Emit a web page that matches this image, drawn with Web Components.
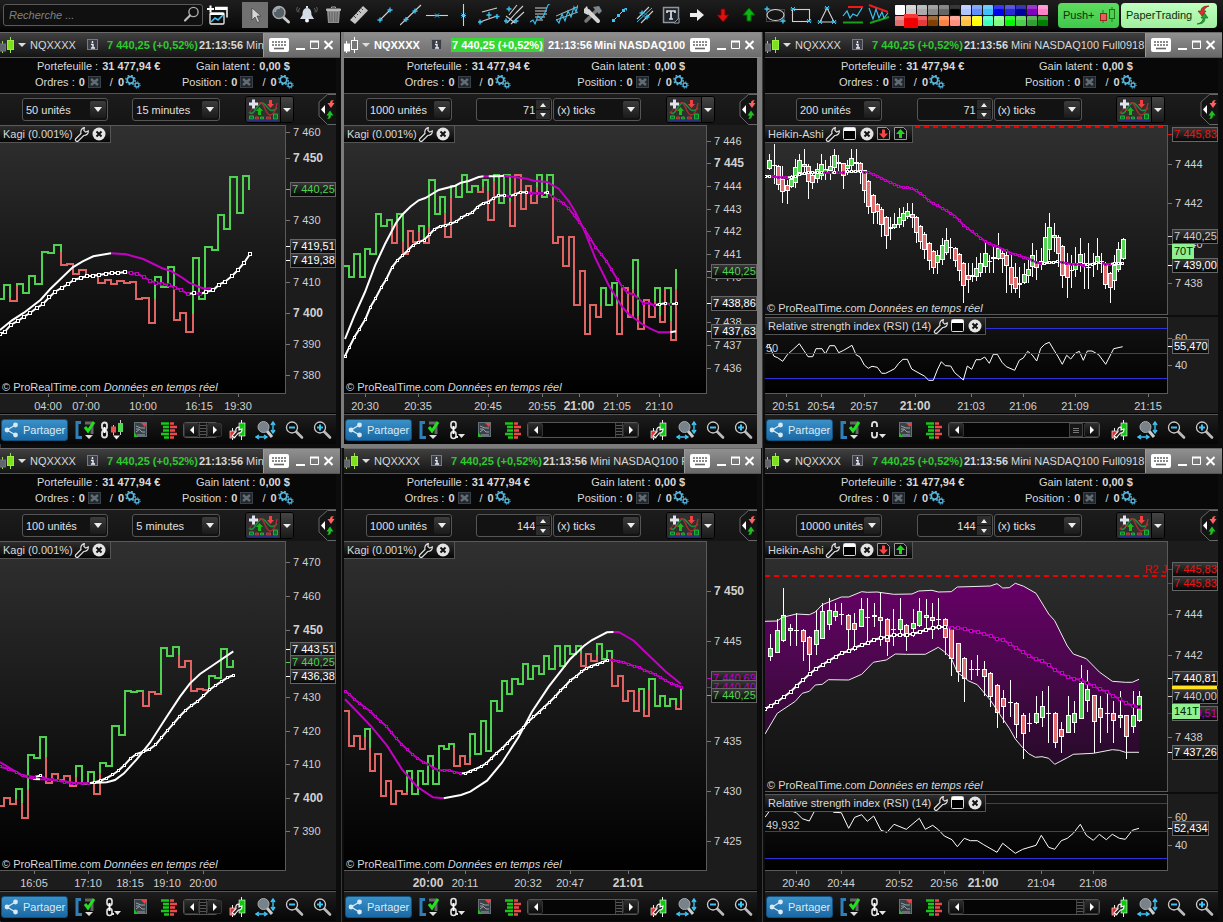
<!DOCTYPE html>
<html lang="fr">
<head>
<meta charset="utf-8">
<title>ProRealTime</title>
<style>
html{height:100%}
body{margin:0;height:100%;background:#000;color:#d8d8d8;font:11px/14px "Liberation Sans",Arial,sans-serif;overflow:hidden;display:flex;flex-direction:column}
main{flex:1;min-height:0;display:grid;grid-template-columns:minmax(0,341fr) minmax(0,421fr) minmax(0,461fr);grid-template-rows:minmax(0,416fr) minmax(0,474fr)}
</style>
</head>
<body>
<tool-bar></tool-bar>
<main>
  <chart-window class="first" units="50 unités" period="15 minutes" link="candle" chart="a"></chart-window>
  <chart-window active units="1000 unités" ticks="71" period="(x) ticks" chart="b"></chart-window>
  <chart-window class="wide" units="200 unités" ticks="71" period="(x) ticks" link="open" thumb="middle" chart="c"></chart-window>
  <chart-window class="first last" units="100 unités" period="5 minutes" chart="d"></chart-window>
  <chart-window class="last" units="1000 unités" ticks="144" period="(x) ticks" chart="e"></chart-window>
  <chart-window class="wide last" units="10000 unités" ticks="144" period="(x) ticks" chart="f"></chart-window>
</main>
<script>
/* ---------- icons ---------- */
const C = '#3cc4f4';
const plus = (x, y) => `<path d="M${x-2.5} ${y}h5M${x} ${y-2.5}v5" stroke="${C}" stroke-width="1.4"/>`;
const star = (x, y) => `<path d="M${x-2} ${y-2}l4 4M${x+2} ${y-2}l-4 4M${x-2.5} ${y}h5" stroke="${C}" stroke-width="1"/>`;
const W = 'stroke="#d0d0d0" stroke-width="1.1" fill="none"';
const wrench = '<path d="M2 15.500L8.500 9c-.8-2.500.3-5.500 3.500-6l-.5 3.300 2 1.500 3-1.300c.2 3-2 5-5 4.800L4.800 17.500C3 18.500 1 17 2 15.500z"';
const glass = (x, y, s) => `<path d="M${x+4} ${y+4}l6 6" stroke="#bbb" stroke-width="2.600" stroke-linecap="round"/><circle cx="${x}" cy="${y}" r="5.500" ${s}/>`;
const ICONS = {
 search:[18,18,`<circle cx="11.500" cy="6" r="4.600" fill="none" stroke="#aaa" stroke-width="1.400"/><path d="M8 9.500L3 14.500" stroke="#bbb" stroke-width="2.200" stroke-linecap="round"/>`],
 layout:[22,22,`<path d="M8 2.500h12v10" fill="none" stroke="#fff" stroke-width="1.500"/><path d="M8 4h12" stroke="#fff" stroke-width="2"/><rect x="3" y="8" width="14" height="11" rx="1" fill="#0a0a0a" stroke="#eee" stroke-width="1.300"/><path d="M3 9h14" stroke="#fff" stroke-width="2"/><path d="M4 17l4-4 3 2 5-5" fill="none" stroke="${C}" stroke-width="1.600"/><path d="M0 4h7M3.500 .5v7" stroke="#fff" stroke-width="2"/>`],
 cursor:[22,22,`<path d="M8 4v12l3-3 2.500 5.500 2-1L13 12h4z" fill="#d4d8dc" stroke="#333" stroke-width=".6"/>`],
 zoom:[22,22,`<path d="M12 12l6.500 6" stroke="#ccc" stroke-width="3" stroke-linecap="round"/><circle cx="9" cy="8.500" r="6" fill="#566067" stroke="#aaa" stroke-width="1.500"/><path d="M5 8a4 4 0 0 1 5-4" stroke="#9ab" stroke-width="2" fill="none"/>`],
 bell:[22,22,`<path d="M11 4c4 0 4.500 4 4.500 7l2.500 4H4l2.500-4c0-3 .5-7 4.500-7z" fill="#d3dce6"/><circle cx="11" cy="16.500" r="2" fill="#f4f4f4"/><path d="M11 2v2" stroke="#ddd" stroke-width="2"/><path d="M4 4c-1.500 1-1.500 3-1 4.500M1.500 3c-1 1.500-1 3 0 5M18 4c1.500 1 1.500 3 1 4.500M20.500 3c1 1.500 1 3 0 5" fill="none" stroke="#777" stroke-width=".8"/>`],
 trash:[22,22,`<path d="M5 7h13l-1 12H6z" fill="#8d8d8d"/><path d="M7.500 8l.5 10M10 8v10M12.800 8v10M15.300 8l-.5 10" stroke="#555" stroke-width=".8"/><rect x="4" y="4.500" width="15" height="2.500" rx="1" fill="#b8b8b8"/><path d="M9.500 4V3h4v1" stroke="#aaa" fill="none"/>`],
 ruler:[22,22,`<path d="M2 16L15 2l5 4.500L7 20z" fill="#c4c4c4"/><path d="M6 12l2 2M8.500 9.500l1.500 1.500M11 7l2 2M13.500 4.500L15 6" stroke="#444"/>`],
 seg:[22,22,`<path d="M6 16L16 6" ${W}/>${plus(6,16)}${plus(16,6)}`],
 ray:[22,22,`<path d="M0 21L21 1" ${W}/>${plus(6,15.5)}${plus(15,7)}`],
 hline:[22,22,`<path d="M0 11.500h22" ${W}/>${star(11,11.5)}`],
 vline:[22,22,`<path d="M11.500 0v22" ${W}/>${star(11.5,11.5)}`],
 channel:[22,22,`<path d="M4 8L19 4M2 18l17-6" ${W}/><path d="M11 8v6M8.500 11h5" stroke="${C}" stroke-width="1.300"/>${plus(19,12.5)}${plus(2,18)}`],
 fork:[22,22,`<path d="M3 19L12 9M7 20L20 8M2 12l9 7M13 1L5 11M12 9l7-7" ${W}/>${plus(5,5)}${plus(2,17)}${plus(12,17)}`],
 fib:[22,22,`<path d="M5 4h12M5 7h12M5 10h12M5 13h10M7 16h6" ${W}/><path d="M0 18l3-2 2 4 3-8 3 3 3-4 4-10 3-2" fill="none" stroke="${C}" stroke-width="1.100"/>`],
 reg:[22,22,`<path d="M0 16L22 8M0 12L21 3" ${W} opacity=".8"/><path d="M0 15l3 4 3-9 3 7 3-10 3 6 3-10 2 5 2-7" fill="none" stroke="${C}" stroke-width="1.100"/>`],
 tools:[22,22,`<path d="M4 17L14 7" stroke="#777" stroke-width="3.500" stroke-linecap="round"/><path d="M11 3l6-1 3 5-3 3-3-3z" fill="#7d858c"/><path d="M6 7l10 10" stroke="#d4d4d4" stroke-width="4" stroke-linecap="round"/><path d="M2 5l3-3 1 3 2 1 1 3-3 2-4-2z" fill="#d4d4d4"/>`],
 anch:[22,22,`<path d="M5 17L17 5" stroke="#ccc" stroke-dasharray="5 3"/><path d="M4 15h3v3H4zM9 10h3v3H9zM14 5h3v3h-3z" fill="${C}"/><path d="M16 4h3v3" fill="${C}"/>`],
 para:[22,22,`<path d="M3 15L15 3M7 19L19 7" ${W}/><path d="M3 18L18 4" stroke="${C}"/>${plus(8,9)}${plus(13,13)}`],
 text:[22,22,`<rect x="3.500" y="3.500" width="15" height="15" fill="#20242a" stroke="#8b96a3" stroke-width="1.500"/><path d="M7 9V7h8v2M11 7v8M9 15h4" stroke="#ddd" stroke-width="1.700" fill="none"/><path d="M14 19l5-5v5z" fill="#111" stroke="#8b96a3"/>`],
 right:[22,22,`<path d="M4 9h7V5l7 6-7 6v-4H4z" fill="#eee"/>`],
 down:[22,22,`<path d="M9 5h4v6h4l-6 7-6-7h4z" fill="#e01010" stroke="#700"/>`],
 upg:[22,22,`<path d="M9 17h4v-6h4L11 4l-6 7h4z" fill="#10b410" stroke="#060"/>`],
 ellipse:[22,22,`<rect x="2.500" y="5.500" width="18" height="12" fill="none" stroke="#444"/><ellipse cx="11.500" cy="11" rx="8.500" ry="5.500" ${W}/>${plus(3,5)}${plus(19,17)}`],
 rect:[22,22,`<rect x="2.500" y="5.500" width="17" height="12" ${W}/>${star(3,5)}${star(19,17)}`],
 tri:[22,22,`<path d="M11 4L4 18h14z" ${W}/>${star(11,4)}${star(4,18)}${star(18,18)}`],
 trend:[22,22,`<path d="M6 3h15" stroke="#f01818" stroke-width="2"/><path d="M1 18.500h20" stroke="#18a018" stroke-width="2"/><path d="M1 12l4-5 3 7 3-4 4 2 5-8" fill="none" stroke="${C}" stroke-width="1.200"/>`],
 wedge:[22,22,`<path d="M1 1l19 7" stroke="#f01818" stroke-width="2"/><path d="M2 19l19-6" stroke="#18a018" stroke-width="2"/><path d="M1 4l4 11 3-10 3 9 3-6 2 6 4-5" fill="none" stroke="${C}" stroke-width="1.100"/>`],
 candles:[16,18,`<path d="M2.500 5v12M10.500 1v16" stroke="var(--wick,#9be04a)"/><rect x="-.5" y="8" width="6" height="7" fill="var(--a,#60646c)" stroke="var(--as,#70747c)"/><rect x="7.500" y="4.500" width="6" height="9" fill="var(--b,#7ee01c)" stroke="var(--bs,#98f040)"/>`],
 info:[12,12,`<rect x=".5" y=".5" width="10" height="10" fill="#3b3e48" stroke="#777a84"/><path d="M5.500 2v2M4 5.500h2v3M4 9h4" stroke="#eee" stroke-width="1.400" fill="none"/>`],
 keyboard:[20,14,`<rect width="20" height="14" rx="2" fill="#fff"/><path d="M3 4h14M3 7h14" stroke="#666" stroke-width="1.600" stroke-dasharray="2 1"/><path d="M5 10.500h10" stroke="#666" stroke-width="1.600"/>`],
 min:[11,14,`<path d="M1 11h9" stroke="#fff" stroke-width="2"/>`],
 max:[11,14,`<path d="M1.500 4v6.500h8V4" fill="none" stroke="#fff"/><path d="M1 3.500h9" stroke="#fff" stroke-width="2"/>`],
 close:[11,14,`<path d="M1.500 3l8 8M9.500 3l-8 8" stroke="#fff" stroke-width="2"/>`],
 cancel:[14,12,`<rect x=".5" y=".5" width="12" height="11" fill="#20262c" stroke="#39424b"/><path d="M3 3l7 6M10 3l-7 6" stroke="#626c74" stroke-width="2.500"/>`],
 gears:[16,14,`<circle cx="5.500" cy="5" r="3.300" fill="none" stroke="#57b7e0" stroke-width="1.700"/><circle cx="5.500" cy="5" r="4.700" fill="none" stroke="#57b7e0" stroke-width="1.300" stroke-dasharray="1.800 1.900"/><circle cx="12" cy="10" r="2" fill="none" stroke="#57b7e0" stroke-width="1.300"/><circle cx="12" cy="10" r="3.200" fill="none" stroke="#57b7e0" stroke-width="1" stroke-dasharray="1.200 1.300"/>`],
 indic:[34,25,`<rect width="34" height="25" fill="#303030"/><path d="M3 15C8 21 11 6 16 6s7 13 15 5" fill="none" stroke="#1f9040" stroke-width="1.500"/><path d="M12 7c6-6 7 11 12 11 4 0 6-6 7-12" fill="none" stroke="#b02c2c" stroke-width="1.500"/><path d="M3 16l4-5 3 3" stroke="#b02c2c" fill="none"/><path d="M3 7h9M7.500 2.500v9" stroke="#dfe4ee" stroke-width="3"/><path d="M12 18v-4h-2l3.500-4 3.500 4h-2v4z" fill="#18b818"/><path d="M23 3h3v4h2l-3.500 4L21 7h2z" fill="#f04040"/><path d="M3.500 22v-3h4v3zM27.500 22v-5h4v5zM14.500 22v-2h3v2z" fill="#0c7020" stroke="#20b040"/><path d="M9.500 22v-2h3v2zM20.500 22v-2h4v2z" fill="#902020" stroke="#c04040"/><path d="M2 23h30" stroke="#2030d0"/>`],
 flap:[18,31,`<path d="M18 .5H9.500L1 8v14l8.500 8.500H18" fill="#141414" stroke="#666"/><path d="M7 11v9l-4-4.500z" fill="#fff"/><path d="M16 6c-3 0-4 1-4 3H9.500l3.500 5 3.500-5h-2c0-1 0-2 1.500-3z" fill="#ff6060"/><path d="M9 25c3 0 4-1 4-3.500h2.500L12 16.500 8.500 21.500h2c0 1.500 0 2.500-1.500 3.500z" fill="#20c020"/>`],
 wrench:[16,16,'<path d="M1.500 13L7 7.500C6.300 5 7.500 2.300 10.300 1.700L9.900 4.500l1.800 1.600L14.300 5c.2 2.700-1.800 4.600-4.600 4.500L4 15.200C2.500 16 .7 14.500 1.500 13z" fill="#111" stroke="#e0e0e0" stroke-width="1.200"/>'],
 win:[14,14,`<rect x=".5" y=".5" width="12" height="12" rx="1" fill="#000" stroke="#ddd"/><path d="M1 2.500h11" stroke="#fff" stroke-width="3"/>`],
 dismiss:[14,14,`<circle cx="7" cy="7" r="6.500" fill="#e4e4e4"/><path d="M4.500 4.500l5 5M9.500 4.500l-5 5" stroke="#111" stroke-width="2"/>`],
 sell:[14,14,`<path d="M.5 .5h9l3 3v9H.5z" fill="#111" stroke="#999"/><path d="M5 2.500h3v4h3l-4.500 5L2 6.500h3z" fill="#f04848"/>`],
 buy:[14,14,`<path d="M.5 .5h9l3 3v9H.5z" fill="#111" stroke="#999"/><path d="M5 11h3V7h3L6.500 2 2 7h3z" fill="#20d820"/>`],
 share:[16,16,`<path d="M11.500 3L3 8l8.500 5" fill="none" stroke="#d8e8f4" stroke-width="1.300"/><circle cx="11.500" cy="3" r="2.400" fill="#d8e8f4"/><circle cx="3" cy="8" r="2.400" fill="#d8e8f4"/><circle cx="11.500" cy="13" r="2.400" fill="#d8e8f4"/>`],
 bracket:[22,20,`<path d="M7 2.500H3v15h5" fill="none" stroke="#2f7fb8" stroke-width="3"/><path d="M11 3h7v11" fill="none" stroke="#666" stroke-width="3"/><path d="M11 7l3 4 6-9" fill="none" stroke="#20e020" stroke-width="3"/><path d="M11 15h8l-4 4z" fill="#ddd"/>`],
 chain:[22,20,`<rect x="5" y="1.500" width="5" height="7" rx="2.500" stroke="#e4e4e4" stroke-width="1.600"/><rect x="5" y="11.500" width="5" height="7" rx="2.500" stroke="#e4e4e4" stroke-width="1.600"/><path d="M7.500 6v8" stroke="#fff" stroke-width="2"/><path d="M10 17h2" stroke="#e4e4e4" stroke-width="2"/><path d="M12 14h7l-3.500 4z" fill="#e4e4e4"/>`],
 chainopen:[22,20,`<path d="M5 7V4.500c0-3.500 5-3.500 5 0V7M5 12v3c0 3.500 5 3.500 5 0v-3" stroke="#e4e4e4" stroke-width="1.800"/><path d="M12 14h7l-3.500 4z" fill="#e4e4e4"/>`],
 chaincandle:[26,20,`<rect x="2" y="2.500" width="5" height="7" rx="2.500" stroke="#e4e4e4" stroke-width="1.800"/><rect x="2" y="10.500" width="5" height="7" rx="2.500" stroke="#e4e4e4" stroke-width="1.800"/><path d="M4.500 7v6" stroke="#fff" stroke-width="2"/><path d="M13.500 5v10M20.500 0v15" stroke="#ccc"/><rect x="11" y="6.500" width="5" height="6" fill="#f05050"/><rect x="18" y="3" width="5" height="9" fill="#50d850"/><path d="M13 15.500h7l-3.500 4z" fill="#eee"/>`],
 notes:[16,18,`<rect x="1.500" y="1.500" width="12" height="14" fill="#3a4248" stroke="#667078"/><path d="M3 5l5 2h4M3 8h3l3 3h3M3 11l4-3M4 14h8" stroke="#98a2aa" fill="none"/><path d="M8 2h6l-2 4z" fill="#f04040"/><path d="M1 16v-5l4 5z" fill="#20c020"/>`],
 book:[18,18,`<path d="M1 2.500h8M3 6h6M3 9.500h6M1 13h8M4 16.500h5" stroke="#18c818" stroke-width="2.400"/><path d="M10 2.500h4M10 6h7M10 9.500h5M10 13h7M10 16.500h4" stroke="#f04848" stroke-width="2.400"/>`],
 setup:[18,20,`<path d="M3.500 8v12M12.500 0v20" stroke="#eee"/><rect x="1" y="11" width="5" height="7" fill="#e03030" stroke="#fff" stroke-width=".6"/><rect x="10" y="3" width="6" height="13" fill="#10c810" stroke="#fff" stroke-width=".6"/><path d="M3 16l4-4.500c-1-3 1-4.500 3-4.500v3l3-1c0 3-2 4-3.500 4l-4 4.500z" fill="#222" stroke="#fff" stroke-width="1.100"/>`],
 fit:[22,20,`<path d="M12 11l5 6" stroke="#ccc" stroke-width="3"/><circle cx="8.500" cy="7" r="5.500" fill="#77828a" stroke="#aaa"/><path d="M18 3v9M16 5l2-3 2 3M16 10l2 3 2-3M2 17h9M4 15l-3 2 3 2M9 15l3 2-3 2" fill="none" stroke="${C}" stroke-width="1.400"/>`],
 zout:[20,20,glass(8,7.5,'fill="#0a0a0a" stroke="#ccc" stroke-width="1.300"')+`<path d="M5 7.500h6" stroke="${C}" stroke-width="2"/>`],
 zin:[20,20,glass(8,7.5,'fill="#0a0a0a" stroke="#ccc" stroke-width="1.300"')+`<path d="M5 7.500h6M8 4.500v6" stroke="${C}" stroke-width="2"/>`],
 push:[18,18,`<path d="M4 4v13M13 1v15" stroke="#1a7a2a"/><rect x="1.500" y="7.500" width="6" height="7" fill="#e06060" stroke="#a02020"/><rect x="10.500" y="3.500" width="5" height="9" fill="#50d050" stroke="#187818"/>`],
 swap:[14,20,`<path d="M13 1C7 1 5 3 5 6H2l4 5 4-5H8c0-2 2-4 5-5z" fill="#d83030" stroke="#801010" stroke-width=".6"/><path d="M1 19c6 0 8-2 8-6h3L8.500 8 5 13h2c0 3-2 5-6 6z" fill="#20a830" stroke="#106018" stroke-width=".6"/>`]
};
const define = (name, make) => customElements.define(name, class extends HTMLElement {
  connectedCallback() {
    if (this.shadowRoot) return;
    this.attachShadow({ mode: 'open' }).innerHTML = make(this);
  }
});
const icon = n => `<ui-icon name="${n}"></ui-icon>`;
const btn = (n, label, cls = '') => `<button type="button" class="${cls}" aria-label="${label}">${icon(n)}</button>`;
const RESET = ':host,*{box-sizing:border-box}button{all:unset;box-sizing:border-box;display:flex;align-items:center;justify-content:center;cursor:pointer}';

define('ui-icon', el => {
  const [w, h, body] = ICONS[el.getAttribute('name')];
  return `<style>:host{display:block;flex:none}svg{display:block}</style><svg width="${w}" height="${h}" viewBox="0 0 ${w} ${h}" fill="none" aria-hidden="true">${body}</svg>`;
});

/* ---------- top toolbar ---------- */
const TOOLS = 'cursor zoom bell trash ruler seg ray hline vline channel fork fib reg tools anch para text right down upg ellipse rect tri trend wedge'.split(' ');
const SWATCHES = '#fff #ccc #aaa #888 #666 #000 #b0c4ff #6090ff #40c0ff #0000f0 #2828d8 #0000a0 #8000c0 #ff80c8 #e07070 #f00000 #e83838 #804000 #ff8040 #ff9080 #ffc040 #ffff00 #40ffc0 #80ff80 #00f800 #48d048 #30a030 #008000'.split(' ');
define('tool-bar', () => `<style>${RESET}
:host{display:flex;align-items:center;height:32px;flex:none;padding:0 7px 0 3px;background:linear-gradient(#1e1e1e,#0a0a0a 28px,#000);overflow:hidden}
label{display:flex;align-items:center;width:200px;height:22px;margin-bottom:2px;padding:0 2px 0 5px;border:1px solid #5a5a5a;border-radius:3px;background:#101010;flex:none}
input{flex:1;min-width:0;padding:0;border:0;outline:0;background:none;color:#999;font:italic 11px "Liberation Sans",Arial,sans-serif}
input::placeholder{color:#808080}
.lay{width:30px;height:28px;flex:none}
.sep{width:1px;height:14px;background:#555;margin:0 5px 4px 4px}
nav{display:flex;padding-bottom:2px}
nav button{width:26px;height:26px;flex:none}
nav button:first-child{background:#707070}
.sw{display:grid;grid-template-columns:repeat(14,11px);grid-auto-rows:11px;margin:0 9px 1px 3px}
.sw button{width:10px;height:10px;box-shadow:inset 0 4px 1px #ffffff38;border-radius:1px}
.sw .on{width:14px;height:14px;margin:-2px;z-index:1}
.act{height:25px;border-radius:4px;gap:4px;color:#0c300c;margin:0 2px 2px 0;justify-content:flex-start;padding:0 4px 0 5px;flex:none}
.p{background:linear-gradient(#5fdc5f,#3fc84a);width:61px}.t{background:linear-gradient(#c0ffc0,#a0f0a0);width:96px}
</style><label><input type="text" placeholder="Recherche ..." aria-label="Recherche">${icon('search')}</label>
${btn('layout', 'Nouvelle disposition', 'lay')}<span class="sep"></span>
<nav>${TOOLS.map(t => btn(t, t)).join('')}</nav>
<div class="sw">${SWATCHES.map((c, i) => `<button type="button" aria-label="Couleur ${c}" class="${i == 15 ? 'on' : ''}" style="background-color:${c}"></button>`).join('')}</div>
<button type="button" class="act p">Push+${icon('push')}</button><button type="button" class="act t">PaperTrading${icon('swap')}</button>`);

/* ---------- window parts ---------- */
define('window-title', () => `<style>${RESET}
:host{display:flex;align-items:center;height:26px;flex:none;margin-right:-4px;border-bottom:1px solid #555;border-top:1px solid #6a6a6a;background:linear-gradient(#404040,#141414);white-space:nowrap;overflow:hidden}
:host([active]){background:linear-gradient(#8e8e8e,#6c6c6c);border-color:#8a8a8a;color:#fff;font-weight:bold;--wick:#fff;--a:#fff;--as:#fff;--b:#777;--bs:#fff}
.txt{flex:1;min-width:0;overflow:hidden;display:flex;align-items:center}
.dd{border:4px solid transparent;border-top-color:#ddd;border-bottom:0;margin:0 4px 0 2px;flex:none}
.sym{width:57px;flex:none}.px{width:90px;height:14px;margin-left:7px;padding-left:1px;color:#2fc92f;font-weight:bold;flex:none}
:host([active]) .px{width:93px;margin-left:8px;background:#35d835;color:#fff}
.tm{margin:0 3px;font-weight:bold;flex:none}:host([active]) .tm{margin:0 2px 0 4px}
.box{display:flex;align-items:center;gap:3px;width:77px;height:24px;padding:0 4px 0 5px;background:linear-gradient(#909090,#686868);flex:none;border-left:1px solid #999}
:host([active]) .box{width:74px;background:none;border-color:transparent;padding-left:2px}
.box button:first-child{margin-right:3px}
</style><div class="txt">${icon('candles')}<i class="dd"></i><span class="sym">NQXXXX</span>${icon('info')}<span class="px">7 440,25 (+0,52%)</span><span class="tm">21:13:56</span><span>Mini NASDAQ100 Full0918</span></div>
<div class="box">${btn('keyboard', 'Clavier')}${btn('min', 'Réduire')}${btn('max', 'Agrandir')}${btn('close', 'Fermer')}</div>`);

const pos = l => `<p>${l} : <b>0</b>${icon('cancel')}<s>/</s><b>0</b>${icon('gears')}</p>`;
define('account-bar', () => `<style>${RESET}
:host{display:flex;justify-content:space-evenly;height:36px;flex:none;padding:0 21px 0 11px;border-bottom:1px solid #555;background:#080808;white-space:nowrap}
div{width:123px;flex:none}.r{width:109px}
p{display:flex;align-items:center;height:18px;margin:0}p:first-child{height:15px}p b{margin-left:4px}
.l p:first-child{padding-left:2px}.r p:first-child{padding-left:14px}
s{text-decoration:none;margin:0 1px 0 8px}ui-icon{margin-left:1px}ui-icon[name=cancel]{margin-left:3px}
</style><div class="l"><p>Portefeuille : <b>31 477,94 €</b></p>${pos('Ordres')}</div><div class="r"><p>Gain latent : <b>0,00 $</b></p>${pos('Position')}</div>`);

define('drop-down', el => `<style>
:host{display:block;position:relative;height:23px;flex:none;width:86px}
select{appearance:none;box-sizing:border-box;width:100%;height:23px;margin:0;padding:0 0 0 3px;border:1px solid #555;border-radius:3px;background:#121212;color:#e0e0e0;font:11px "Liberation Sans",Arial,sans-serif}
i{position:absolute;right:2px;top:3px;width:16px;height:17px;border-radius:2px;background:linear-gradient(#3c3c3c,#1a1a1a);pointer-events:none}
i::after{content:"";position:absolute;left:4px;top:6px;border:4px solid transparent;border-top:5px solid #eee;border-bottom:0}
</style><select aria-label="Choix"><option>${el.getAttribute('value')}</option></select><i></i>`);

define('period-bar', el => { const t = el.getAttribute('ticks'); return `<style>${RESET}
:host{display:flex;align-items:center;justify-content:space-between;height:31px;flex:none;padding-left:22px;background:linear-gradient(#1c1c1c,#141414)}
:host(.wide){padding-left:31px}
.g{display:flex;gap:1px}drop-down.p{width:88px}
.spin{display:flex;align-items:center;width:76px;height:23px;padding-right:1px;border:1px solid #555;border-radius:3px;background:#121212}
.spin input{width:58px;padding:0;border:0;background:none;color:#e0e0e0;text-align:right;font:11px "Liberation Sans",Arial,sans-serif}
.spin div{display:grid;gap:1px;margin-left:1px}
.spin button{width:14px;height:9px;background:#2c2c2c}
.spin button::after{content:"";border:3px solid transparent;border-bottom:4px solid #eee;border-top:0}
.spin button+button::after{transform:rotate(180deg)}
.ind{display:flex;width:49px;height:27px;border:1px solid #000;border-radius:3px;background:#2c2c2c;overflow:hidden}
.ind button+button{width:13px;border-left:1px solid #000;background:linear-gradient(#444,#1a1a1a)}
.ind button+button::after{content:"";border:4px solid transparent;border-top-color:#eee;border-bottom:0}
</style><drop-down value="${el.getAttribute('units')}"></drop-down>
<div class="g">${t ? `<div class="spin"><input type="text" value="${t}" aria-label="Nombre"><div><button type="button" aria-label="Plus"></button><button type="button" aria-label="Moins"></button></div></div>` : ''}<drop-down class="p" value="${el.getAttribute('period')}"></drop-down></div>
<div class="ind">${btn('indic', 'Indicateurs')}<button type="button" aria-label="Options"></button></div>${btn('flap', 'Volet ordres')}`; });

define('window-footer', el => { const l = el.getAttribute('link'); const mid = el.getAttribute('thumb') == 'middle'; return `<style>${RESET}
:host{display:flex;align-items:center;height:29px;flex:none;padding-left:1px;background:linear-gradient(#1d1d1d,#060606)}
.share{width:67px;height:22px;margin-right:3px;gap:3px;justify-content:flex-start;padding-left:2px;border-radius:3px;background:linear-gradient(#3a90c8,#1a68a4);color:#dceaf4;flex:none;border:1px solid #12507e}
.k{width:28px;height:26px;flex:none}
.bar{display:flex;flex:1;min-width:0;height:16px;border:1px solid #555;border-radius:3px;background:#050505;margin:0 6px 0 0}
.bar button{width:15px;height:14px;background:linear-gradient(#2c2c2c,#0c0c0c);border-radius:2px;border:1px solid #333;flex:none}
.bar button::after{content:"";border:4px solid transparent;border-right-color:#fff;border-left:0}
.bar button:last-child::after{transform:rotate(180deg)}
.track{flex:1;display:flex;justify-content:flex-end}
.track i{width:8px;height:14px;border:1px solid #444;border-width:0 1px;background:repeating-linear-gradient(#111 0 2px,#555 2px 3px)}
.mid i{width:14px;margin-right:1px;border-width:1px;background:linear-gradient(#777,#777) 3px 4px/6px 1px no-repeat,linear-gradient(#777,#777) 3px 6px/6px 1px no-repeat,linear-gradient(#777,#777) 3px 8px/6px 1px no-repeat #161616}
</style><button type="button" class="share">${icon('share')}Partager</button>
${btn('bracket', 'Modèle', 'k')}${btn(l == 'candle' ? 'chaincandle' : l == 'open' ? 'chainopen' : 'chain', 'Lier', 'k')}${btn('notes', 'Notes', 'k')}${btn('book', 'Carnet', 'k')}
<div class="bar"><button type="button" aria-label="Gauche"></button><div class="track ${mid ? 'mid' : ''}"><i></i></div><button type="button" aria-label="Droite"></button></div>
${btn('setup', 'Configurer', 'k')}${btn('fit', 'Ajuster', 'k')}${btn('zout', 'Zoom arrière', 'k')}${btn('zin', 'Zoom avant', 'k')}`; });

define('chart-tag', el => `<style>${RESET}
:host{display:flex;align-items:center;height:17px;padding:0 3px 1px;gap:2px;background:linear-gradient(#2e2e2e,#060606);border:1px solid #555;border-width:0 1px 1px 0;white-space:nowrap}
button{width:15px;height:15px}</style><slot></slot>${el.getAttribute('icons').split(' ').map(n => btn(n, n)).join('')}`);

/* ---------- series: stored in thirds of a pixel, dx/dy bring them to the pane's corner ---------- */
const GREEN = '#4fd24f', RED = '#e06464', MAG = '#c400c4';
const DATA = {
a:{dx:0,dy:75,k:[0,12,748,118,'447 404 453 402 430 377 402 305 309 285 345 341 372 360 378 374 398 390 402 393 399 396 446 443 518 380 411 350 510 488 546 324 447 290 299 195 237 80 188 78'],
 ms:4,s:'w 0,540 36,511 72,488 122,449 150,418 218,352 248,334 280,319 333,310 m 378,313 430,327 485,354 515,364 545,382 566,397 600,412 615,416 634,414',
 d:'w 0,552 14,546 33,524 54,513 72,500 90,489 110,474 129,462 148,442 165,425 186,413 205,402 222,389 243,384 260,378 279,377 297,375 317,371 337,369 355,369 375,366 m 394,369 411,372 432,380 449,392 468,398 487,402 506,405 525,413 543,420 563,432 w 582,429 m 600,432 w 618,426 640,420 657,404 675,395 696,378 714,360 732,339 750,312',
 ax:'7 460|7;7 450|33|b;7 430|95;7 410|157;7 400|188|b;7 390|219;7 380|250;7 440,25|64|g;7 419,51|121|w;7 419,38|135|w',
 tx:'04:00|48;07:00|86;10:00|143;16:15|199;19:30|238'},
b:{dx:-6,dy:-15,k:[9,21,1002,450,'437 470 402 470 386 402 282 318 299 369 282 402 332 366 318 369 180 282 231 351 198 231 165 215 198 216 180 300 165 249 165 318 165 267 198 249 165 231 165 369 351 438 351 555 452 642 554 591 504 555 488 642 503 591 420 626 540 591 504 606 503 660'],
 ms:3,s:'w 9,657 36,590 69,516 99,437 129,372 162,309 180,285 205,260 230,241 250,234 270,222 290,210 340,197 357,188 380,183 410,171 425,169 m 440,169 w 455,169 471,169 486,167 m 510,170 555,176 575,182 615,186 650,206 680,243 700,276 727,331 760,414 800,496 840,560 860,582 900,612 925,626 950,637 985,637 w 1002,634',
 d:'w 9,708 22,682 37,652 52,628 70,598 85,562 100,536 118,502 133,478 150,442 166,421 182,406 198,391 213,375 229,367 246,360 262,344 277,328 295,319 311,316 326,311 342,305 358,293 375,284 391,278 406,261 423,250 438,246 454,235 470,227 487,226 m 502,229 w 519,223 535,217 553,217 m 568,219 585,220 601,220 w 616,217 m 632,230 649,241 664,249 680,265 697,287 712,307 728,328 746,357 761,382 778,403 794,424 808,448 826,478 841,500 856,518 874,523 889,535 904,549 921,550 937,556 w 952,553 970,550 m 985,552 w 1003,551',
 ax:'7 446|16;7 445|38|b;7 444|61;7 443|84;7 442|106;7 441|129;7 440|152;7 438|197;7 437|220;7 436|243;7 440,25|146|g;7 438,86|178|w;7 437,63|206|w',
 tx:'20:30|21;20:35|74;20:45|144;20:55|198;21:00|235|b;21:05|273;21:10|315'},
c:{dx:-9,dy:-15,c:[22,1082,'102,120,148,150g 72,134,138,193r 134,138,195,210r 138,178,216,250r 180,195,213,252r 166,178,202,205g 118,142,190,205g 102,119,158,165g 88,133,142,160g 132,138,187,237r 158,165,190,207r 130,148,177,190g 102,132,167,180g 120,148,160,180g 108,137,152,180g 88,105,144,155g 105,126,132,162r 130,130,169,207r 120,134,146,165g 88,113,137,150g 86,126,132,152g 125,128,155,193r 150,150,213,250r 180,182,261,282r 222,224,280,312r 250,252,275,312r 262,267,314,350r 288,291,348,387r 290,321,327,360r 280,312,325,327g 264,292,315,325g 262,279,303,320g 250,272,292,297g 250,282,295,325r 288,290,340,370r 315,318,367,388r 337,342,391,418r 365,368,422,450r 390,394,444,461r 390,406,430,463g 354,376,420,435g 325,361,400,405g 355,382,384,417r 382,384,424,440r 398,402,454,484r 426,428,498,548r 430,464,480,518r 430,466,470,486g 412,444,470,482g 400,430,458,472g 370,400,440,460g 405,422,424,458r 375,412,418,460g 340,385,418,420g 390,398,416,460r 395,406,438,518r 405,440,496,518r 430,470,508,518r 440,490,494,533g 430,462,490,492g 415,448,468,490g 370,406,440,470g 390,430,444,480r 385,422,434,450g 310,352,430,430g 280,322,390,420g 310,345,353,395g 345,350,402,440r 375,378,468,503r 400,432,475,533r 405,450,454,505r 380,428,450,470g 355,401,430,455g 400,428,437,507r 370,440,443,507r 400,430,436,470g 355,408,428,450g 400,422,426,458r 425,432,495,507r 455,460,505,548r 405,434,482,510g 365,388,450,455g 355,358,418,420g'],
 ms:3,d:'w 9,169 22,169 m 35,170 48,172 61,172 74,172 w 87,172 100,169 113,164 126,160 139,158 152,158 165,158 178,158 m 190,158 204,158 w 217,158 m 230,158 243,158 w 256,155 269,155 281,154 294,154 m 307,156 320,157 333,163 346,168 359,175 371,181 385,187 398,193 410,198 423,203 436,203 449,205 462,212 474,220 487,229 500,242 513,250 526,257 540,264 553,272 566,279 578,288 591,300 604,315 617,325 630,335 643,344 656,354 669,364 682,371 695,376 706,379 720,387 733,392 746,399 759,403 772,407 785,411 797,414 810,421 823,427 836,431 w 848,430 862,428 875,427 887,425 m 900,427 914,430 927,433 940,433 953,434 964,436 w 977,434 990,432 1003,428 1016,428 m 1030,433 1043,433 w 1056,430 1069,430 1082,430',
 dash:[459,20],
 ax:'7 440|119;7 444|39;7 442|78;7 438|158;7 445,83|9|r;7 440,25|111|l;7 439,00|140|w;70T|126|T',
 tx:'20:51|21;20:54|56;20:57|99;21:00|150|b;21:03|206;21:06|258;21:09|310;21:15|383',
 rsi:{dy:-591,blue:[625,775],red:700,lab:['50',35],ax:'60|21;40|48;55,470|29|w',
 l:'w 12,682 20,672 36,709 47,713 62,724 76,704 94,688 112,671 126,692 138,710 152,710 162,686 180,686 190,702 203,677 218,677 230,698 245,691 270,676 282,704 294,711 307,735 319,745 330,739 346,742 359,760 371,760 398,746 410,730 423,718 436,718 449,747 474,761 487,768 500,781 514,781 526,750 538,725 550,737 566,738 578,758 604,780 616,738 629,748 642,719 655,719 668,711 682,730 694,703 706,703 720,727 733,740 758,751 772,721 784,714 797,694 810,704 824,723 836,685 848,673 862,667 875,689 887,708 901,733 914,706 926,717 940,700 952,694 964,721 976,693 990,693 1010,704 1031,733 1055,686 1082,680'}},
d:{dx:0,dy:-273,k:[0,11,700,633,'1068 1043 1062 1017 1104 914 924 860 999 972 990 978 1008 947 1003 965 1032 938 948 828 855 722 726 722 768 726 732 594 618 591 651 633 722 716 721 678 684 597 651'],
 ms:3,s:'m 0,936 66,977 100,987 w 120,988 m 170,990 220,998 265,1000 w 290,998 320,997 345,990 372,970 410,928 450,878 500,800 540,740 570,700 600,672 640,645 700,604',
 d:'m 0,950 25,957 50,966 66,975 85,978 103,981 w 121,977 m 139,987 157,989 175,992 193,996 213,999 230,999 248,1001 266,1000 w 284,997 301,992 320,984 338,974 355,962 373,946 392,925 410,912 430,905 448,898 467,884 485,862 502,842 521,820 539,799 557,781 575,766 593,754 611,737 629,719 647,706 665,694 683,682 701,676',
 ax:'7 470|21;7 460|55;7 450|89|b;7 430|156;7 420|190;7 410|223;7 400|257|b;7 390|290;7 443,51|108|w;7 436,38|135|w;7 440,25|121|g',
 tx:'16:05|34;17:10|88;18:15|130;19:10|167;20:00|203'},
e:{dx:-6,dy:-3,k:[9,21,1017,445,'513 618 587 627 567 692 642 768 722 792 752 762 692 762 692 732 647 732 618 627 611 678 647 672 582 642 543 632 483 513 423 462 416 432 372 417 377 402 347 387 318 378 318 342 318 378 342 363 311 357 332 437 407 483 453 513 447 528 417 498 467 498 476 507'],
 ms:3,s:'m 9,478 50,520 90,562 135,617 180,688 225,740 273,772 305,775 w 357,765 385,755 435,722 480,668 530,590 570,515 620,440 685,357 725,318 750,300 795,277 815,276 m 830,276 875,302 910,336 970,394 1017,432',
 d:'m 9,453 22,463 37,478 53,490 68,502 85,514 100,530 116,544 133,559 148,578 163,595 179,613 195,628 211,643 227,655 244,666 260,673 275,684 290,691 306,691 322,691 337,696 355,700 w 370,700 385,693 401,687 418,679 434,669 448,655 463,640 481,625 496,609 512,592 529,577 544,563 560,544 575,530 591,516 607,501 623,486 641,468 656,451 670,438 685,421 703,409 718,395 733,385 749,378 766,372 781,367 796,361 m 813,361 829,364 845,367 860,373 877,379 892,382 907,391 925,397 940,404 956,412 970,421 987,430 1003,436 1018,442',
 ax:'7 450|50|b;7 445|100;7 435|200;7 430|250;7 425|300;7 440,69|137|m;7 440,40|146|m;7 440,25|154|g',
 tx:'20:00|84|b;20:11|121;20:32|184;20:47|226;21:01|284|b'},
f:{dx:-9,dy:-3,c:[25,1131,'282,325,350,362g 238,270,338,340g 145,226,304,306g 252,265,272,318r 220,269,271,318w 268,270,307,362r 288,290,346,392r 210,270,316,346g 190,212,296,298g 174,211,254,270g 190,213,232,242g 190,222,225,256w 222,224,270,335r 220,248,270,334r 174,208,260,262g 174,230,233,304w 190,226,232,262g 156,230,242,318r 234,236,307,348r 208,268,271,318w 174,238,270,290g 252,254,290,332r 208,250,268,290g 174,213,258,260g 176,224,235,270g 188,230,244,298r 174,236,239,270w 234,237,295,346r 262,265,358,407r 308,310,397,427r 350,353,418,487r 360,386,388,420w 345,386,388,407w 362,386,412,468r 396,398,470,502r 432,434,520,564r 450,475,502,548r 420,485,490,530g 486,488,556,595r 520,524,583,656r 520,549,552,577w 468,520,550,552g 452,499,535,562g 438,518,520,608w 516,518,610,624r 546,566,590,640r 468,524,578,580g 484,520,548,578g 375,430,536,538g 390,448,482,516g 464,466,547,640r 468,505,535,608r 460,520,523,578w 484,520,542,608r 453,524,533,564g 524,526,590,656r 453,524,560,578g 453,468,543,545g'],
 up:'9,244 45,243 62,232 103,222 142,224 160,216 181,194 238,171 260,171 299,155 316,157 345,156 395,163 450,162 470,153 510,151 529,156 568,155 586,141 685,138 705,131 722,144 742,143 760,130 785,139 822,160 860,222 878,242 916,318 934,342 973,356 1012,396 1051,424 1090,427 1111,427 1131,418',
 lo:'9,582 46,520 100,484 121,460 142,454 160,435 181,433 199,419 260,420 299,403 334,367 355,363 373,360 400,342 433,343 490,343 529,322 547,335 568,355 586,397 620,423 646,434 685,480 722,536 742,565 760,597 781,622 800,641 820,652 840,650 860,655 878,673 916,653 934,643 994,640 1051,629 1072,631 1090,637 1131,637',
 ms:4,d:'w 9,507 26,498 46,485 66,470 86,455 104,437 123,420 143,402 162,386 182,374 201,362 221,350 240,339 260,333 278,323 299,315 317,309 336,299 357,294 375,290 396,285 414,284 434,284 453,281 473,276 492,269 513,264 531,261 549,261 m 570,264 588,264 608,267 627,272 647,275 666,283 686,288 705,297 724,300 743,312 762,323 782,336 801,348 821,357 840,363 861,375 879,391 899,400 918,411 937,416 957,419 975,429 995,438 1014,448 1035,456 1053,468 1073,476 1092,490 1112,497 1131,502',
 dash:[9,108],note:1,
 ax:'7 444|73;7 442|114;7 438|196;7 445,83|28|r;7 445,83|42|r;7 440,25|148|y;7 440,81|137|w;7 440,00|155|l;7 439,51|172|m;141T|170|T;7 437,26|211|w',
 tx:'20:40|31;20:44|76;20:52|134;20:56|179;21:00|218|b;21:04|276;21:08|328',
 rsi:{dy:-762,blue:[790,955],red:874,lab:['49,932',35],ax:'60|23;40|51;52,434|34|w',
 l:'w 9,832 26,808 60,795 85,812 103,818 121,836 142,843 158,812 180,790 215,817 238,818 260,865 278,832 299,824 316,844 335,828 357,871 375,877 396,853 433,868 472,835 490,868 512,856 530,870 547,888 570,899 586,920 607,895 625,902 646,902 665,914 705,937 722,910 760,940 782,928 822,916 838,886 860,922 878,928 898,902 916,895 934,880 955,853 973,886 994,901 1012,883 1033,899 1051,883 1072,895 1090,898 1111,871 1131,865'}}
};
const pt = (p, o) => { const [x, y] = p.split(',').map(Number); return [(x + o.dx) / 3, (y + o.dy) / 3]; };
const poly = (str, o) => str.split(' ').map(p => pt(p, o).map(v => v.toFixed(1)).join(' ')).join('L');

/* A colour letter (w or m) applies to the segments that end at the points after it. */
function runs(str, o) {
  let col = '#fff', prev = null; const paths = [], marks = [];
  for (const t of str.split(' ')) {
    if (t == 'w' || t == 'm') { col = t == 'w' ? '#fff' : MAG; paths.push([col, prev ? [prev] : []]); continue; }
    prev = pt(t, o); paths[paths.length - 1][1].push(prev); marks.push([...prev, col]);
  }
  return { paths, marks };
}
function curve(str, o, w) {
  return runs(str, o).paths.map(([c, p]) => `<path d="M${p.map(q => q.map(v => v.toFixed(1)).join(' ')).join('L')}" stroke="${c}" stroke-width="${w}" fill="none"/>`).join('');
}
function dots(str, o, s) {
  return runs(str, o).marks.map(([x, y, c]) => `<rect x="${Math.round(x - s / 2) + .5}" y="${Math.round(y - s / 2) + .5}" width="${s - 1}" height="${s - 1}" fill="#111" stroke="${c}"/>`).join('');
}
/* Kagi: the line turns green above the previous high and red below the previous low. */
function kagi([x0, first, last, end, lv], o) {
  const L = lv.split(' ').map(Number), n = L.length, step = (last - first) / (n - 1);
  const X = v => Math.round((v + o.dx) / 3), Y = v => Math.round((v + o.dy) / 3);
  let col = L[0] > 500 ? RED : GREEN, out = [], d = `M${X(x0)} ${Y(L[0])}`;
  const turn = (x, y, c) => { d += `V${y}`; out.push([col, d]); col = c; d = `M${x} ${y}`; };
  L.push(end);
  for (let i = 1; i <= n; i++) {
    const x = X(first + step * (i - 1)); d += `H${x}`;
    const ref = i > 1 ? L[i - 2] : null;
    if (ref !== null && L[i] < L[i - 1] && L[i] < ref && col == RED) turn(x, Y(ref), GREEN);
    else if (ref !== null && L[i] > L[i - 1] && L[i] > ref && col == GREEN) turn(x, Y(ref), RED);
    d += `V${Y(L[i])}`;
  }
  out.push([col, d]);
  return out.map(([c, p]) => `<path d="${p}" stroke="${c}" stroke-width="2" stroke-linecap="square" fill="none" shape-rendering="crispEdges"/>`).join('');
}
function candles([first, last, str], o) {
  const a = str.split(' '), step = (last - first) / (a.length - 1);
  return '<g shape-rendering="crispEdges">' + a.map((s, i) => {
    const c = s.slice(-1), [h, t, b, l] = s.slice(0, -1).split(',').map(v => Math.round((+v + o.dy) / 3));
    const x = Math.round((first + step * i + o.dx) / 3), bh = Math.max(b - t, 1);
    return `<rect x="${x}" y="${h}" width="1" height="${l - h}" fill="#fff"/><rect x="${x - 2}" y="${t}" width="5" height="${bh}" fill="#fff"/>` +
      (bh > 2 && c != 'w' ? `<rect x="${x - 1}" y="${t + 1}" width="3" height="${bh - 2}" fill="${c == 'g' ? '#56d456' : '#e27070'}"/>` : '');
  }).join('') + '</g>';
}
function axis(str) {
  const INK = { g: GREEN, w: '#fff', r: '#f01010', l: '#ccc', m: MAG };
  return '<svg><defs><linearGradient id="bx" x2="0" y2="1"><stop stop-color="#3a3a3a"/><stop offset="1" stop-color="#050505"/></linearGradient></defs>' + str.split(';').map(e => {
    const [t, ys, k] = e.split('|'), y = +ys;
    if (!k || k == 'b') return `<path d="M0 ${y + .5}h4" stroke="#777"/><text x="7" y="${y + 4}" ${k ? 'class="b"' : ''}>${t}</text>`;
    if (k == 'T') return `<rect x="4" y="${y - 7}" width="${t.length > 3 ? 28 : 22}" height="15" fill="#90f090"/><text x="6" y="${y + 4}" style="fill:#062006">${t}</text>`;
    if (k == 'y') return `<rect x="4" y="${y - 7}" width="45" height="14" fill="#ffe020"/>`;
    return `<path d="M0 ${y + .5}h4" stroke="${INK[k]}"/><rect x="4.500" y="${y - 7 + .5}" width="${t.length < 8 ? 36 : 45}" height="14" fill="url(#bx)" stroke="#666"/><text x="6" y="${y + 4}" style="fill:${INK[k]}">${t}</text>`;
  }).join('') + '</svg>';
}
const PANE = `*{box-sizing:border-box}:host{display:grid;grid-template-columns:minmax(0,1fr) 50px;min-height:0;background:#1c1c1c}
.plot{position:relative;border:1px solid #5a5a5a;border-left:0;overflow:hidden;background:linear-gradient(var(--from,#303030),var(--to,#000))}
svg{display:block;position:absolute;top:-1px;left:0;width:100%;height:calc(100% + 2px);overflow:hidden}
.ax{position:relative}.ax svg{top:0;height:100%}
text{font:11px "Liberation Sans",Arial,sans-serif;fill:#d0d0d0}.b{font-weight:bold;font-size:12px}
chart-tag{position:absolute;top:0;left:0}
.copy{position:absolute;left:2px;bottom:-1px;margin:0;white-space:nowrap}`;

define('price-pane', el => {
  const o = DATA[el.getAttribute('chart')]; let g = '';
  if (o.up) g += `<linearGradient id="bd" x2="0" y2="1"><stop stop-color="#660066"/><stop offset=".5" stop-color="#48084a"/><stop offset="1" stop-color="#260a28"/></linearGradient><path d="M${poly(o.up, o)}L${poly(o.lo.split(' ').reverse().join(' '), o)}Z" fill="url(#bd)"/>`;
  if (o.k) g += kagi(o.k, o);
  if (o.s) g += curve(o.s, o, 2);
  if (o.c) g += candles(o.c, o);
  if (o.up) g += [o.up, o.lo].map(s => `<path d="M${poly(s, o)}" fill="none" stroke="#eee"/>`).join('');
  g += curve(o.d, o, 2) + dots(o.d, o, o.ms);
  if (o.dash) { const [x, y] = o.dash, Y = Math.round((y + o.dy) / 3); g += `<path d="M${(x + o.dx) / 3} ${Y}H2000" stroke="#f00000" stroke-width="2" stroke-dasharray="5 4"/>`; }
  const tag = o.c ? '<chart-tag icons="wrench win dismiss sell buy">Heikin-Ashi</chart-tag>' : '<chart-tag icons="wrench dismiss">Kagi (0.001%)</chart-tag>';
  return `<style>${PANE}:host{flex:1}.r2{position:absolute;right:0;top:20px;color:#f00000}</style>
<div class="plot"><svg>${g}</svg>${tag}${o.note ? '<span class="r2">R2 J</span>' : ''}<p class="copy">© ProRealTime.com <i>Données en temps réel</i></p></div><div class="ax">${axis(o.ax)}</div>`;
});

define('rsi-pane', el => {
  const p = DATA[el.getAttribute('chart')], r = p.rsi, o = { dx: p.dx, dy: r.dy };
  const h = (v, c) => `<path d="M0 ${Math.round((v + r.dy) / 3) + .5}H2000" stroke="${c}"/>`;
  return `<style>${PANE}:host{height:77px;margin-top:2px;flex:none;--from:#141414;--to:#000}</style>
<div class="plot"><svg>${h(r.blue[0], '#3030d8')}${h(r.blue[1], '#3030d8')}${curve(r.l, o, 1)}${h(r.red, '#e80000')}<text x="1" y="${r.lab[1]}">${r.lab[0]}</text></svg>
<chart-tag icons="wrench win dismiss">Relative strength index (RSI) (14)</chart-tag></div><div class="ax">${axis(r.ax)}</div>`;
});

define('time-axis', el => `<style>:host{display:block;height:21px;flex:none;box-sizing:border-box;border-bottom:1px solid #555;background:#1c1c1c}
svg{display:block;width:100%;height:20px}text{font:11px "Liberation Sans",Arial,sans-serif;fill:#d0d0d0;text-anchor:middle}.b{font-weight:bold;font-size:12px}</style>
<svg>${DATA[el.getAttribute('chart')].tx.split(';').map(e => { const [t, x, b] = e.split('|'); return `<path d="M${+x + .5} 0v3" stroke="#777"/><text x="${x}" y="16" class="${b || ''}">${t}</text>`; }).join('')}<path d="M0 19.500H2000" stroke="#000"/></svg>`);

define('chart-window', el => {
  const a = n => el.getAttribute(n) || '', c = a('chart');
  return `<style>:host{display:flex;flex-direction:column;min-width:0;min-height:0;box-sizing:border-box;padding:0 5px 4px 3px;background:linear-gradient(90deg,#3a3a3a 1px,#0c0c0c 1px)}
:host(.first){padding-left:0}:host(.last){padding-bottom:1px}:host([active]){background:#7c7c7c}</style>
<window-title ${el.hasAttribute('active') ? 'active' : ''}></window-title><account-bar></account-bar>
<period-bar class="${el.classList.contains('wide') ? 'wide' : ''}" units="${a('units')}" ticks="${a('ticks')}" period="${a('period')}"></period-bar>
<price-pane chart="${c}" ${DATA[c].rsi ? 'style="--to:#101010"' : ''}></price-pane>${DATA[c].rsi ? `<rsi-pane chart="${c}"></rsi-pane>` : ''}
<time-axis chart="${c}"></time-axis><window-footer link="${a('link')}" thumb="${a('thumb')}"></window-footer>`;
});
</script>
</body>
</html>
